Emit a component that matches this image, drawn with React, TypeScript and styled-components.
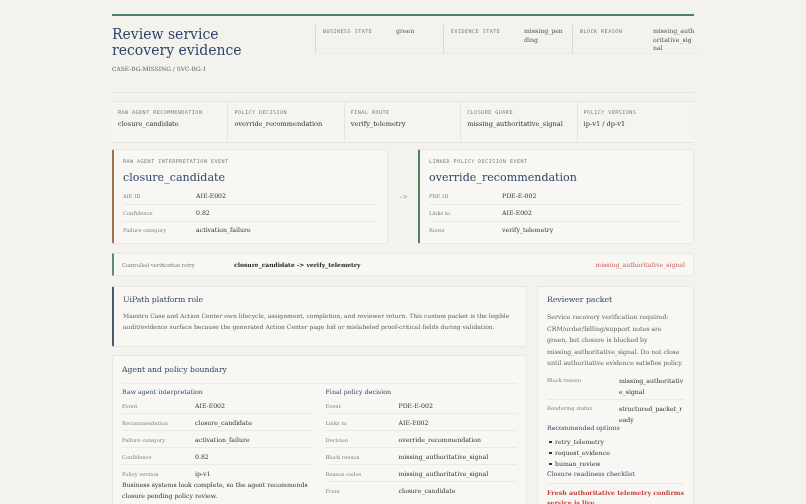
import styled, { createGlobalStyle } from "styled-components";

const colors = {
  bg: "#f3f2ed",
  card: "#f8f7f3",
  line: "#e6e4de",
  navy: "#31466a",
  text: "#2f2f2f",
  muted: "#7f7d79",
  para: "#5e5c59",
  green: "#4e7f69",
  brown: "#9c7351",
  slate: "#4a586c",
  red: "#c0403d",
};

const GlobalStyle = createGlobalStyle`
  body {
    margin: 0;
    background: ${colors.bg};
    font-family: "DejaVu Serif", "Liberation Serif", serif;
    color: ${colors.text};
  }
`;

const stats = [
  { label: "BUSINESS STATE", value: "green" },
  { label: "EVIDENCE STATE", value: "missing_pending" },
  { label: "BLOCK REASON", value: "missing_authoritative_signal" },
];

const strip = [
  { label: "RAW AGENT RECOMMENDATION", value: "closure_candidate" },
  { label: "POLICY DECISION", value: "override_recommendation" },
  { label: "FINAL ROUTE", value: "verify_telemetry" },
  { label: "CLOSURE GUARD", value: "missing_authoritative_signal" },
  { label: "POLICY VERSIONS", value: "ip-v1 / dp-v1" },
];

const rawEvent = [
  ["AIE ID", "AIE-E002"],
  ["Confidence", "0.82"],
  ["Failure category", "activation_failure"],
];

const policyEvent = [
  ["PDE ID", "PDE-E-002"],
  ["Links to", "AIE-E002"],
  ["Route", "verify_telemetry"],
];

const rawBoundary = [
  ["Event", "AIE-E002"],
  ["Recommendation", "closure_candidate"],
  ["Failure category", "activation_failure"],
  ["Confidence", "0.82"],
  ["Policy version", "ip-v1"],
];

const policyBoundary = [
  ["Event", "PDE-E-002"],
  ["Links to", "AIE-E002"],
  ["Decision", "override_recommendation"],
  ["Block reason", "missing_authoritative_signal"],
  ["Reason codes", "missing_authoritative_signal"],
  ["From", "closure_candidate"],
];

// nbsp keeps "green, but" together so the lines break as in the packet view
const packetText =
  "Service recovery verification required: CRM/order/billing/support notes are green,\u00a0but closure is blocked by missing_authoritative_signal. Do not close until authoritative evidence satisfies policy.";

const App = () => {
  return (
    <>
      <GlobalStyle />
      <Page>
        <TopRule />
        <Header>
          <TitleBlock>
            <Title>Review service recovery evidence</Title>
            <Subtitle>CASE-BG-MISSING / SVC-BG-1</Subtitle>
          </TitleBlock>
          <StatGrid>
            {stats.map((s) => (
              <StatCell key={s.label}>
                <MonoLabel>{s.label}</MonoLabel>
                <StatValue>{s.value}</StatValue>
              </StatCell>
            ))}
          </StatGrid>
        </Header>

        <Strip>
          {strip.map((s) => (
            <StripCell key={s.label}>
              <MonoLabel>{s.label}</MonoLabel>
              <StripValue>{s.value}</StripValue>
            </StripCell>
          ))}
        </Strip>

        <EventRow>
          <EventCard accent={colors.brown}>
            <MonoLabel>RAW AGENT INTERPRETATION EVENT</MonoLabel>
            <CardTitle>closure_candidate</CardTitle>
            {rawEvent.map(([k, v]) => (
              <FieldRow key={k}>
                <FieldLabel>{k}</FieldLabel>
                <FieldValue>{v}</FieldValue>
              </FieldRow>
            ))}
          </EventCard>
          <Arrow>-&gt;</Arrow>
          <EventCard accent={colors.green}>
            <MonoLabel>LINKED POLICY DECISION EVENT</MonoLabel>
            <CardTitle>override_recommendation</CardTitle>
            {policyEvent.map(([k, v]) => (
              <FieldRow key={k}>
                <FieldLabel>{k}</FieldLabel>
                <FieldValue>{v}</FieldValue>
              </FieldRow>
            ))}
          </EventCard>
        </EventRow>

        <RetryBar>
          <RetryLabel>Controlled verification retry</RetryLabel>
          <RetryPath>closure_candidate -&gt; verify_telemetry</RetryPath>
          <RetryFlag>missing_authoritative_signal</RetryFlag>
        </RetryBar>

        <Lower>
          <LeftColumn>
            <Panel accent={colors.slate}>
              <PanelHeading>UiPath platform role</PanelHeading>
              <Para>
                Maestro Case and Action Center own lifecycle, assignment,
                completion, and reviewer return. This custom packet is the
                legible audit/evidence surface because the generated Action
                Center page hid or mislabeled proof-critical fields during
                validation.
              </Para>
            </Panel>
            <Panel>
              <BoundaryHeading>Agent and policy boundary</BoundaryHeading>
              <TwoCol>
                <div>
                  <SubHeading>Raw agent interpretation</SubHeading>
                  {rawBoundary.map(([k, v]) => (
                    <FieldRow key={k}>
                      <FieldLabel>{k}</FieldLabel>
                      <FieldValue>{v}</FieldValue>
                    </FieldRow>
                  ))}
                  <Note>
                    Business systems look complete, so the agent recommends
                    closure pending policy review.
                  </Note>
                </div>
                <div>
                  <SubHeading>Final policy decision</SubHeading>
                  {policyBoundary.map(([k, v]) => (
                    <FieldRow key={k}>
                      <FieldLabel>{k}</FieldLabel>
                      <FieldValue>{v}</FieldValue>
                    </FieldRow>
                  ))}
                </div>
              </TwoCol>
            </Panel>
          </LeftColumn>

          <Panel>
            <PanelHeading>Reviewer packet</PanelHeading>
            <PacketPara>{packetText}</PacketPara>
            <PacketRow>
              <FieldLabel>Block reason</FieldLabel>
              <PacketValue>missing_authoritative_signal</PacketValue>
            </PacketRow>
            <PacketRow>
              <FieldLabel>Rendering status</FieldLabel>
              <PacketValue>structured_packet_ready</PacketValue>
            </PacketRow>
            <OptionsHeading>Recommended options</OptionsHeading>
            <BulletList>
              <li>retry_telemetry</li>
              <li>request_evidence</li>
              <li>human_review</li>
            </BulletList>
            <ChecklistHeading>Closure readiness checklist</ChecklistHeading>
            <Alert>Fresh authoritative telemetry confirms service is live</Alert>
          </Panel>
        </Lower>
      </Page>
    </>
  );
};

export default App;

// Styled Components
const Page = styled.div`
  width: 582px;
  margin: 0 auto;
  padding-top: 14px;
  will-change: transform;
`;

const TopRule = styled.div`
  height: 2px;
  background: ${colors.green};
`;

const Header = styled.header`
  display: grid;
  grid-template-columns: 203px 1fr;
  padding: 9px 0 19px;
  border-bottom: 1px solid ${colors.line};
`;

const TitleBlock = styled.div`
  padding-top: 1px;
`;

const Title = styled.h1`
  margin: 0;
  font-size: 14px;
  line-height: 16px;
  font-weight: 400;
  color: ${colors.navy};
  width: 150px;
`;

const Subtitle = styled.div`
  margin-top: 7px;
  font-size: 5.9px;
  line-height: 8px;
  color: #5f5f5f;
`;

const StatGrid = styled.div`
  display: grid;
  grid-template-columns: 128px 129px 1fr;
  align-self: start;
`;

const StatCell = styled.div`
  display: grid;
  grid-template-columns: 73px 42px;
  align-items: start;
  min-height: 27px;
  box-sizing: border-box;
  padding: 2px 6px 0 7px;
  border-left: 1px solid #dad8d2;
  border-bottom: 1px solid #eeece6;
`;

const MonoLabel = styled.div`
  font-family: "DejaVu Sans Mono", "Liberation Mono", monospace;
  font-size: 5.1px;
  letter-spacing: 0.45px;
  line-height: 8px;
  color: ${colors.muted};
`;

const StatValue = styled.div`
  font-size: 6.2px;
  line-height: 8.5px;
  color: #4d4d4d;
  word-break: break-all;
`;

const Strip = styled.div`
  margin-top: 8px;
  display: grid;
  grid-template-columns: repeat(5, 1fr);
  border-top: 1px solid ${colors.line};
  border-bottom: 1px solid ${colors.line};
  background: #f5f4f0;
`;

const StripCell = styled.div`
  padding: 6px 6px 13px;
  border-right: 1px solid ${colors.line};
  &:last-child {
    border-right: none;
  }
`;

const StripValue = styled.div`
  margin-top: 3px;
  font-size: 6.6px;
  line-height: 10px;
  color: ${colors.text};
`;

const EventRow = styled.div`
  margin-top: 6px;
  display: grid;
  grid-template-columns: 276px 1fr 276px;
  align-items: stretch;
`;

const EventCard = styled.div<{ accent: string }>`
  background: ${colors.card};
  border: 1px solid #e9e7e1;
  border-left: 2px solid ${(p) => p.accent};
  border-radius: 2px;
  padding: 7px 10px 5.5px 9px;
`;

const CardTitle = styled.div`
  margin: 4.5px 0 3px;
  font-size: 11.1px;
  line-height: 15px;
  color: ${colors.navy};
`;

const Arrow = styled.div`
  display: flex;
  align-items: center;
  justify-content: center;
  font-family: "DejaVu Sans Mono", monospace;
  font-size: 7px;
  color: #8a8a8a;
`;

const FieldRow = styled.div`
  display: grid;
  grid-template-columns: 73px 1fr;
  align-items: center;
  padding: 4.5px 0 3.5px;
  line-height: 8px;
  border-bottom: 1px solid #ebe9e3;
  &:last-of-type {
    border-bottom: none;
  }
`;

const FieldLabel = styled.div`
  font-size: 5.2px;
  color: ${colors.muted};
`;

const FieldValue = styled.div`
  font-size: 6.2px;
  color: ${colors.text};
`;

const RetryBar = styled.div`
  margin-top: 9px;
  height: 23px;
  box-sizing: border-box;
  display: flex;
  align-items: center;
  background: ${colors.card};
  border: 1px solid #ebe9e3;
  border-left: 2px solid #5f8b74;
  padding: 0 8px 0 8px;
`;

const RetryLabel = styled.div`
  width: 112px;
  font-size: 5.1px;
  color: #75736f;
`;

const RetryPath = styled.div`
  flex: 1;
  font-size: 6px;
  font-weight: 700;
  color: #262626;
`;

const RetryFlag = styled.div`
  font-size: 6.2px;
  color: #c4605f;
`;

const Lower = styled.div`
  margin-top: 10px;
  display: grid;
  grid-template-columns: 415px 157px;
  gap: 10px;
  align-items: start;
`;

const LeftColumn = styled.div`
  display: flex;
  flex-direction: column;
  gap: 8px;
`;

const Panel = styled.div<{ accent?: string }>`
  background: ${colors.card};
  border: 1px solid #e9e7e1;
  border-left: ${(p) => (p.accent ? `2px solid ${p.accent}` : "1px solid #e9e7e1")};
  border-radius: 2px;
  padding: 8px 9px 14px 9px;
`;

const PanelHeading = styled.div`
  font-size: 7.7px;
  line-height: 10px;
  color: ${colors.navy};
`;

const BoundaryHeading = styled(PanelHeading)`
  margin-top: 1px;
  padding-bottom: 8px;
  border-bottom: 1px solid #ecebe5;
`;

const Para = styled.p`
  margin: 5px 0 0;
  font-size: 6px;
  line-height: 11px;
  color: ${colors.para};
`;

const TwoCol = styled.div`
  margin-top: 3px;
  display: grid;
  grid-template-columns: 1fr 1fr;
  gap: 12px;
`;

const SubHeading = styled.div`
  font-size: 6.3px;
  line-height: 10px;
  color: ${colors.navy};
`;

const Note = styled.p`
  margin: -2px 0 0;
  font-size: 6.2px;
  line-height: 11px;
  color: ${colors.text};
`;

const PacketPara = styled.p`
  margin: 6px 0 4px;
  font-size: 6.2px;
  line-height: 11.5px;
  color: ${colors.para};
`;

const PacketRow = styled.div`
  display: grid;
  grid-template-columns: 72px 1fr;
  align-items: start;
  padding: 2px 0 1px;
  line-height: 11.5px;
  border-bottom: 1px solid #ebe9e3;
  & + & {
    border-bottom: none;
    padding-top: 3px;
  }
`;

const PacketValue = styled.div`
  font-size: 6.2px;
  color: ${colors.text};
  word-break: break-all;
`;

const OptionsHeading = styled(SubHeading)`
  margin-top: -3.5px;
`;

const BulletList = styled.ul`
  margin: 3px 0 0;
  padding: 0;
  list-style: none;
  li {
    position: relative;
    padding-left: 8px;
    font-size: 6.2px;
    line-height: 11px;
    color: ${colors.text};
  }
  li::before {
    content: "";
    position: absolute;
    left: 2px;
    top: 4.5px;
    width: 2.5px;
    height: 2.5px;
    background: #333;
  }
`;

const ChecklistHeading = styled(SubHeading)`
  padding-bottom: 4px;
  border-bottom: 1px solid #ebe9e3;
`;

const Alert = styled.div`
  margin-top: 3.5px;
  font-size: 6.3px;
  line-height: 10px;
  font-weight: 700;
  color: ${colors.red};
`;
